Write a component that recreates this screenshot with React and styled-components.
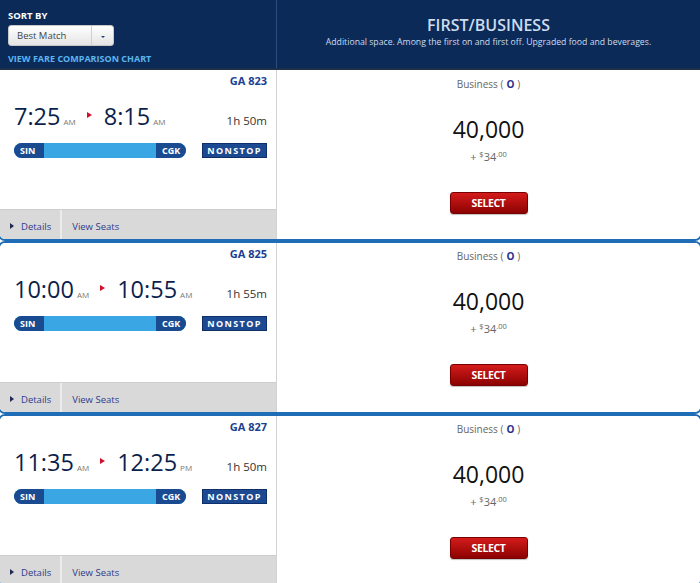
import React from "react";
import styled, { createGlobalStyle } from "styled-components";

const GlobalStyle = createGlobalStyle`
  html, body {
    margin: 0;
    overflow: hidden;
    background: #fff;
    font-family: "Open Sans", "Liberation Sans", sans-serif;
  }
`;

//Header parts
const Header = styled.div`
  display: grid;
  grid-template-columns: 277px 1fr;
  height: 68px;
  background: #0b2a58;
  border-bottom: 2px solid #1d2f4a;
  box-sizing: content-box;
`;

const SortPanel = styled.div`
  border-right: 1px solid #2c4c7c;
  padding: 10px 0 0 8px;
`;

const SortLabel = styled.div`
  color: #fff;
  font-size: 9.5px;
  font-weight: 700;
  line-height: 12px;
`;

const SelectBox = styled.div`
  display: flex;
  width: 106px;
  height: 21px;
  margin-top: 3px;
  border-radius: 3px;
  background: linear-gradient(#ffffff, #e4e4e4);
  border: 1px solid #c8c8c8;
  box-sizing: border-box;
  font-size: 9.5px;
  color: #444;
  span {
    flex: 1;
    padding-left: 8px;
    line-height: 19px;
  }
`;

const Caret = styled.div`
  width: 21px;
  border-left: 1px solid #cfcfcf;
  display: flex;
  align-items: center;
  justify-content: center;
  &::after {
    content: "";
    border-left: 2px solid transparent;
    border-right: 2px solid transparent;
    border-top: 2px solid #1e3f7a;
    margin-top: 2px;
  }
`;

const ChartLink = styled.div`
  margin-top: 7px;
  color: #5cb4ee;
  font-size: 9px;
  font-weight: 700;
  line-height: 12px;
`;

const CabinHead = styled.div`
  text-align: center;
  padding-top: 15px;
  color: #cddcee;
`;

const CabinTitle = styled.div`
  font-size: 16px;
  font-weight: 600;
  line-height: 20px;
`;

const CabinText = styled.div`
  font-size: 8.7px;
  line-height: 12px;
  margin-top: 1px;
`;

//Flight cards
const Card = styled.div`
  display: grid;
  grid-template-columns: 277px 1fr;
  height: 169px;
  margin: 0 -2px;
  border: 2px solid #1f6cb7;
  border-radius: 7px;
  overflow: hidden;
  ${(p) =>
    p.$first &&
    `border-top: none; border-top-left-radius: 0; border-top-right-radius: 0;`}
`;

const FlightSide = styled.div`
  display: flex;
  flex-direction: column;
  padding-left: 2px;
  border-right: 1px solid #d3d3d3;
  background: #fff;
`;

const FlightBody = styled.div`
  padding: 0 9px 0 12px;
`;

const FlightNo = styled.div`
  margin-top: ${(p) => (p.$first ? "4px" : "4px")};
  text-align: right;
  font-size: 11px;
  font-weight: 700;
  line-height: 14px;
  color: #1c3f91;
`;

const TimeRow = styled.div`
  display: flex;
  align-items: baseline;
  margin-top: 13px;
  height: 30px;
`;

const Time = styled.span`
  font-size: 23.5px;
  line-height: 30px;
  color: #0c1f4c;
`;

const Meridiem = styled.span`
  font-size: 8px;
  color: #777;
  margin-left: 3px;
`;

const Arrow = styled.span`
  display: inline-block;
  margin: 0 12px 0 11px;
  width: 0;
  height: 0;
  border-top: 3px solid transparent;
  border-bottom: 3px solid transparent;
  border-left: 5px solid #d0112b;
  transform: translateY(-7px);
`;

const Duration = styled.span`
  margin-left: auto;
  font-size: 11.5px;
  color: #333;
`;

const RouteRow = styled.div`
  display: flex;
  margin-top: 12px;
  height: 15px;
`;

const RouteBar = styled.div`
  display: flex;
  justify-content: space-between;
  width: 172px;
  border-radius: 8px;
  background: #3aa7e4;
  overflow: hidden;
`;

const Airport = styled.span`
  width: 30px;
  background: #1a4b91;
  color: #fff;
  font-size: 9px;
  font-weight: 700;
  line-height: 15px;
  text-align: ${(p) => (p.$end ? "right" : "left")};
  padding: 0 6px;
  box-sizing: border-box;
`;

const Badge = styled.span`
  margin-left: auto;
  width: 65px;
  background: #1b4a92;
  border: 1px solid #0e2f68;
  box-sizing: border-box;
  color: #fff;
  font-size: 9px;
  font-weight: 700;
  letter-spacing: 1.4px;
  line-height: 13px;
  text-align: center;
`;

const Footer = styled.div`
  margin-top: auto;
  display: flex;
  height: 30px;
  margin-left: -2px;
  background: #d9d9d9;
  border-top: 1px solid #cdcdcd;
  box-sizing: border-box;
`;

const FooterLink = styled.div`
  display: flex;
  align-items: center;
  padding: 3px ${(p) => (p.$divided ? "9px" : "10px")} 0 10px;
  border-right: ${(p) => (p.$divided ? "2px solid #ececec" : "none")};
  color: #2d3b8b;
  font-size: 9.5px;
  font-weight: 500;
`;

const Tri = styled.span`
  width: 0;
  height: 0;
  border-top: 3px solid transparent;
  border-bottom: 3px solid transparent;
  border-left: 4px solid #1f2a55;
  margin-right: 7px;
`;

const FareSide = styled.div`
  display: flex;
  flex-direction: column;
  align-items: center;
  background: #fff;
`;

const FareClass = styled.div`
  margin-top: ${(p) => (p.$first ? "7px" : "6px")};
  font-size: 10px;
  line-height: 14px;
  color: #666;
  b {
    color: #2a2f8f;
    font-weight: 700;
    margin: 0 3px;
  }
`;

const Miles = styled.div`
  margin-top: 23px;
  font-size: 23px;
  line-height: 30px;
  color: #111;
`;

const Fee = styled.div`
  margin-top: 3px;
  font-size: 11px;
  line-height: 14px;
  color: #666;
  sup {
    font-size: 7.5px;
    vertical-align: 4px;
  }
`;

const SelectButton = styled.button`
  margin-top: 28px;
  width: 78px;
  height: 22px;
  border: 1px solid #780000;
  border-radius: 3px;
  background: linear-gradient(#d41b1b, #8c0202);
  color: #fff;
  font-family: "Open Sans", "Liberation Sans", sans-serif;
  font-size: 10.5px;
  font-weight: 700;
  letter-spacing: -0.4px;
  box-shadow: 0 1px 1px rgba(0, 0, 0, 0.25);
  padding: 0;
`;

const flights = [
  { no: "GA 823", dep: "7:25", depM: "AM", arr: "8:15", arrM: "AM", dur: "1h 50m" },
  { no: "GA 825", dep: "10:00", depM: "AM", arr: "10:55", arrM: "AM", dur: "1h 55m" },
  { no: "GA 827", dep: "11:35", depM: "AM", arr: "12:25", arrM: "PM", dur: "1h 50m" },
];

const FlightCard = ({ f, first }) => (
  <Card $first={first}>
    <FlightSide>
      <FlightBody>
        <FlightNo $first={first}>{f.no}</FlightNo>
        <TimeRow>
          <Time>{f.dep}</Time>
          <Meridiem>{f.depM}</Meridiem>
          <Arrow />
          <Time>{f.arr}</Time>
          <Meridiem>{f.arrM}</Meridiem>
          <Duration>{f.dur}</Duration>
        </TimeRow>
        <RouteRow>
          <RouteBar>
            <Airport>SIN</Airport>
            <Airport $end>CGK</Airport>
          </RouteBar>
          <Badge>NONSTOP</Badge>
        </RouteRow>
      </FlightBody>
      <Footer>
        <FooterLink $divided>
          <Tri />
          Details
        </FooterLink>
        <FooterLink>View Seats</FooterLink>
      </Footer>
    </FlightSide>
    <FareSide>
      <FareClass $first={first}>
        Business (<b>O</b>)
      </FareClass>
      <Miles>40,000</Miles>
      <Fee>
        + <sup>$</sup>34<sup>.00</sup>
      </Fee>
      <SelectButton>SELECT</SelectButton>
    </FareSide>
  </Card>
);

export default function App() {
  return (
    <>
      <GlobalStyle />
      <Header>
        <SortPanel>
          <SortLabel>SORT BY</SortLabel>
          <SelectBox>
            <span>Best Match</span>
            <Caret />
          </SelectBox>
          <ChartLink>VIEW FARE COMPARISON CHART</ChartLink>
        </SortPanel>
        <CabinHead>
          <CabinTitle>FIRST/BUSINESS</CabinTitle>
          <CabinText>
            Additional space. Among the first on and first off. Upgraded food
            and beverages.
          </CabinText>
        </CabinHead>
      </Header>
      {flights.map((f, i) => (
        <FlightCard key={f.no} f={f} first={i === 0} />
      ))}
    </>
  );
}
